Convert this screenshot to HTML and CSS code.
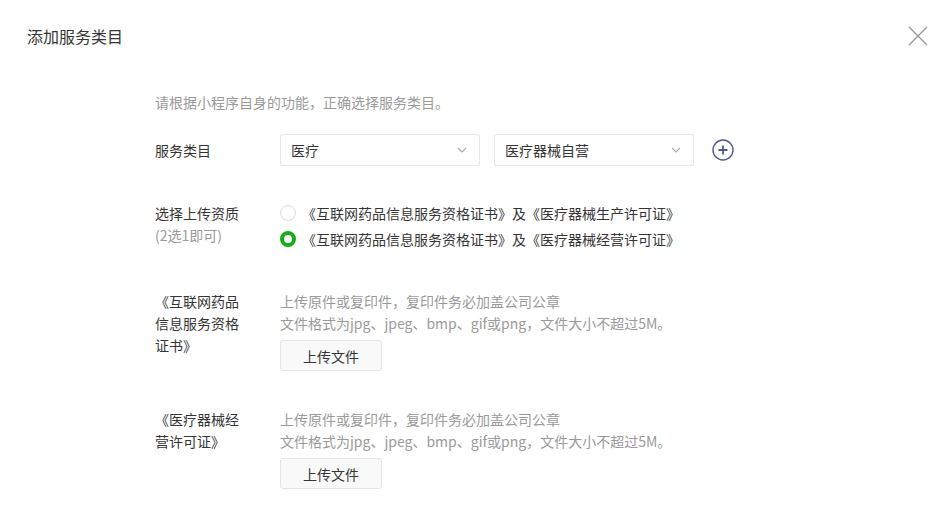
FILE: index.html
```html
<!DOCTYPE html>
<html lang="zh">
<head>
<meta charset="utf-8">
<title>添加服务类目</title>
<link rel="stylesheet" href="styles.css">
</head>
<body>
<div class="dialog">
  <div class="header">
    <div class="title">添加服务类目</div>
    <svg class="close" width="20" height="20" viewBox="0 0 20 20"><path d="M1 1L19 19M19 1L1 19" stroke="#9a9a9a" stroke-width="1.4" fill="none"/></svg>
  </div>
  <div class="content">
    <p class="intro">请根据小程序自身的功能，正确选择服务类目。</p>
    <div class="row row-select">
      <div class="label">服务类目</div>
      <div class="field selects">
        <div class="select"><span>医疗</span><svg width="10" height="6" viewBox="0 0 10 6"><path d="M1 1L5 5L9 1" stroke="#a8a8a8" stroke-width="1.1" fill="none"/></svg></div>
        <div class="select"><span>医疗器械自营</span><svg width="10" height="6" viewBox="0 0 10 6"><path d="M1 1L5 5L9 1" stroke="#a8a8a8" stroke-width="1.1" fill="none"/></svg></div>
        <svg class="plus" width="22" height="22" viewBox="0 0 22 22"><circle cx="11" cy="11" r="10" stroke="#4b5b8e" stroke-width="1.4" fill="none"/><path d="M11 6.5V15.5M6.5 11H15.5" stroke="#4b5b8e" stroke-width="1.8"/></svg>
      </div>
    </div>
    <div class="row row-radio">
      <div class="label">选择上传资质<br><span class="sub">(2选1即可)</span></div>
      <div class="field">
        <div class="radio"><span class="dot"></span>《互联网药品信息服务资格证书》及《医疗器械生产许可证》</div>
        <div class="radio checked"><span class="dot"></span>《互联网药品信息服务资格证书》及《医疗器械经营许可证》</div>
      </div>
    </div>
    <div class="row row-upload">
      <div class="label">《互联网药品信息服务资格证书》</div>
      <div class="field">
        <div class="tip">上传原件或复印件，复印件务必加盖公司公章</div>
        <div class="tip">文件格式为jpg、jpeg、bmp、gif或png，文件大小不超过5M。</div>
        <div class="btn">上传文件</div>
      </div>
    </div>
    <div class="row row-upload second">
      <div class="label">《医疗器械经营许可证》</div>
      <div class="field">
        <div class="tip">上传原件或复印件，复印件务必加盖公司公章</div>
        <div class="tip">文件格式为jpg、jpeg、bmp、gif或png，文件大小不超过5M。</div>
        <div class="btn">上传文件</div>
      </div>
    </div>
  </div>
</div>
</body>
</html>
```
FILE: styles.css
```css
* { box-sizing: border-box; }
html, body { margin: 0; padding: 0; background: #fff; }
body {
  font-family: "Noto Sans CJK SC", "Noto Sans", sans-serif;
  font-size: 14px;
  line-height: 22px;
  color: #353535;
}
.dialog { width: 951px; height: 528px; overflow: hidden; }
.header {
  height: 72px;
  display: flex;
  align-items: center;
  justify-content: space-between;
  padding: 0 23px 0 27px;
}
.title { font-size: 16px; color: #353535; }
.close { display: block; }
.content { padding-left: 155px; }
.intro { margin: 19px 0 0; color: #9a9a9a; }
.row { display: flex; }
.label { width: 90px; margin-right: 35px; flex: none; }
.sub { color: #9a9a9a; }
.row-select { margin-top: 21px; align-items: center; }
.selects { display: flex; align-items: center; }
.select {
  width: 200px;
  height: 32px;
  border: 1px solid #e7e7e7;
  border-radius: 2px;
  display: flex;
  align-items: center;
  justify-content: space-between;
  padding: 0 12px 0 10px;
  margin-right: 14px;
}
.select svg { display: block; }
.plus { display: block; margin-left: 4px; }
.row-radio { margin-top: 36px; }
.radio { display: flex; align-items: center; margin-left: 0; }
.radio + .radio { margin-top: 4px; }
.dot {
  width: 16px;
  height: 16px;
  border-radius: 50%;
  border: 1px solid #dcdcdc;
  margin-right: 6px;
  flex: none;
}
.radio.checked .dot { border: 4px solid #1aad19; }
.row-upload { margin-top: 40px; }
.row-upload.second { margin-top: 37px; }
.tip { color: #9a9a9a; }
.btn {
  margin-top: 6px;
  width: 102px;
  height: 31px;
  border: 1px solid #e5e5e5;
  border-radius: 3px;
  background: #f9f9f9;
  display: flex;
  align-items: center;
  justify-content: center;
  color: #353535;
}
```
